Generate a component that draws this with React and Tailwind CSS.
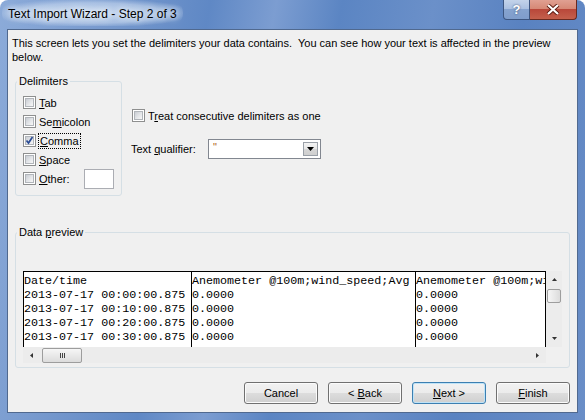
import React from 'react';

const Tri = ({ d, w = 5, h = 3, color = '#333' }) => {
  const horiz = d === 'left' || d === 'right';
  const W = horiz ? h : w;
  const H = horiz ? w : h;
  const pts = {
    up: `${W / 2},0 ${W},${H} 0,${H}`,
    down: `0,0 ${W},0 ${W / 2},${H}`,
    left: `${W},0 ${W},${H} 0,${H / 2}`,
    right: `0,0 0,${H} ${W},${H / 2}`,
  }[d];
  return (
    <svg width={W} height={H} viewBox={`0 0 ${W} ${H}`} className="block">
      <polygon points={pts} fill={color} />
    </svg>
  );
};

const Check = ({ checked }) => (
  <span className="relative block w-[13px] h-[13px] shrink-0 border border-[#8e8f8f] bg-white p-[1px]">
    <span className="block w-full h-full border border-[#b1b5ba] bg-[linear-gradient(135deg,#c9cdd3_0%,#e4e6e9_55%,#f7f7f7_100%)]" />
    {checked && (
      <svg width="11" height="11" viewBox="0 0 11 11" className="absolute left-0 top-0">
        <path d="M2.5 5.5 L4.5 8 L8.5 2" stroke="#2a4b94" strokeWidth="1.7" fill="none" />
      </svg>
    )}
  </span>
);

const Button = ({ children, primary }) => (
  <button
    className={`w-[74px] h-[22px] rounded-[3px] border text-[11px] leading-[18px] text-black bg-[linear-gradient(to_bottom,#f2f2f2_0%,#ebebeb_50%,#dddddd_50%,#cfcfcf_100%)] ${
      primary
        ? 'border-[#3c7fb1] shadow-[inset_0_0_0_1px_#bfe3f7]'
        : 'border-[#707070] shadow-[inset_0_0_0_1px_#fbfbfb]'
    }`}
  >
    {children}
  </button>
);

const Row = ({ children }) => (
  <div className="h-[19px] flex items-center gap-[3px]">{children}</div>
);

const dates = [
  '2013-07-17 00:00:00.875',
  '2013-07-17 00:10:00.875',
  '2013-07-17 00:20:00.875',
  '2013-07-17 00:30:00.875',
];

export default function App() {
  return (
    <div className="w-[585px] h-[420px] overflow-hidden font-['Liberation_Sans',Arial,sans-serif] text-[11px] text-black">
      <div className="w-full h-full rounded-t-[8px] flex flex-col bg-[linear-gradient(100deg,#8cabd9_0%,#7598cd_18%,#5f88c5_32%,#7c9dd1_42%,#5b85c3_52%,#6b90c9_66%,#5982c1_80%,#6a8ec7_100%)]">
        {/* title bar */}
        <div className="h-[29px] shrink-0 flex items-start">
          <div className="ml-[2px] px-[6px] pt-[7px] pb-[4px] text-[12px] leading-[15px] rounded-full bg-[radial-gradient(ellipse_at_center,rgba(214,228,246,0.85)_0%,rgba(214,228,246,0.5)_55%,rgba(214,228,246,0)_80%)] [text-shadow:0_0_6px_#fff,0_0_10px_#e4eefa]">
            Text Import Wizard - Step 2 of 3
          </div>
          <div className="ml-auto mr-[8px] flex h-[20px]">
            <div className="w-[27px] h-full rounded-bl-[4px] border border-t-0 border-[#3d5680] bg-[linear-gradient(to_bottom,#c3d3ea_0%,#a9bfe0_50%,#86a3cf_50%,#7f9dcb_100%)] flex items-center justify-center text-white font-bold text-[13px] leading-none [text-shadow:0_0_2px_#2b3f63]">
              ?
            </div>
            <div className="w-[47px] h-full rounded-br-[4px] border border-t-0 border-l-0 border-[#6a2a20] bg-[linear-gradient(to_bottom,#e0a092_0%,#d58673_50%,#b9483a_50%,#c4604c_100%)] flex items-center justify-center">
              <svg width="14" height="11" viewBox="0 0 14 11">
                <path d="M2 1 L12 10 M12 1 L2 10" stroke="#5a1a10" strokeWidth="4" />
                <path d="M2 1 L12 10 M12 1 L2 10" stroke="#fff" strokeWidth="2.2" />
              </svg>
            </div>
          </div>
        </div>

        {/* client area */}
        <div className="mx-[7px] h-[384px] shrink-0 border border-[#50698f] bg-[#f0f0f0] flex flex-col">
          <p className="pl-[4px] pt-[6px] leading-[14px]">
            This screen lets you set the delimiters your data contains.{'\u00a0'} You can see how your text is
            affected in the preview
            <br />
            below.
          </p>

          <div className="flex items-start mt-[11px]">
            <fieldset className="ml-[7px] w-[107px] border border-[#d5dfe5] rounded-[3px] pb-[7px]">
              <legend className="ml-[1px] px-[2px] leading-[13px]">Delimiters</legend>
              <div className="pl-[7px] pt-[5px]">
                <Row>
                  <Check />
                  <span className="leading-[14px]">
                    <u>T</u>ab
                  </span>
                </Row>
                <Row>
                  <Check />
                  <span className="leading-[14px]">
                    Se<u>m</u>icolon
                  </span>
                </Row>
                <Row>
                  <Check checked />
                  <span className="-ml-[1px] border border-dotted border-black leading-[14px] px-[1px]">
                    <u>C</u>omma
                  </span>
                </Row>
                <Row>
                  <Check />
                  <span className="leading-[14px]">
                    <u>S</u>pace
                  </span>
                </Row>
                <Row>
                  <Check />
                  <span className="w-[45px] leading-[14px]">
                    <u>O</u>ther:
                  </span>
                  <span className="-ml-[3px] block w-[30px] h-[20px] border border-[#abadb3] bg-white" />
                </Row>
              </div>
            </fieldset>

            <div className="ml-[10px] pt-[34px]">
              <div className="h-[13px] flex items-center gap-[3px]">
                <Check />
                <span className="leading-[14px]">
                  T<u>r</u>eat consecutive delimiters as one
                </span>
              </div>
              <div className="mt-[17px] h-[20px] flex items-center -ml-[1px]">
                <span className="w-[77px] leading-[14px]">
                  Text <u>q</u>ualifier:
                </span>
                <div className="w-[113px] h-[20px] border border-[#828790] bg-white flex p-[2px]">
                  <span className="flex-1 pl-[2px] leading-[10px] text-[#b0651e]">"</span>
                  <div className="w-[15px] h-full border border-[#9aa0a8] bg-[linear-gradient(to_bottom,#f3f3f3_0%,#e6e6e6_50%,#d6d6d6_50%,#cfcfcf_100%)] flex items-center justify-center">
                    <Tri d="down" w={7} h={4} color="#000" />
                  </div>
                </div>
              </div>
            </div>
          </div>

          <fieldset className="mt-[30px] ml-[7px] w-[555px] border border-[#d5dfe5] rounded-[3px] pb-[4px]">
            <legend className="ml-[1px] px-[2px] leading-[13px]">
              Data <u>p</u>review
            </legend>
            <div className="pl-[7px] pt-[32px]">
              <div className="w-[539px] h-[92px] flex flex-col">
                <div className="flex h-[76px]">
                  <div className="w-[523px] h-full border-l border-t border-r border-black bg-white flex overflow-hidden font-['Liberation_Mono',monospace] text-[11.7px] leading-[14px] pt-[2px] whitespace-nowrap">
                    <div className="w-[167px] shrink-0">
                      <div>Date/time</div>
                      {dates.map((d) => (
                        <div key={d}>{d}</div>
                      ))}
                    </div>
                    <div className="w-[224px] shrink-0 border-l border-black -mt-[2px] pt-[2px]">
                      <div>Anemometer @100m;wind_speed;Avg</div>
                      {dates.map((d) => (
                        <div key={d}>0.0000</div>
                      ))}
                    </div>
                    <div className="flex-1 min-w-0 overflow-hidden border-l border-black -mt-[2px] pt-[2px]">
                      <div>Anemometer @100m;wi</div>
                      {dates.map((d) => (
                        <div key={d}>0.0000</div>
                      ))}
                    </div>
                  </div>
                  <div className="w-[16px] h-full bg-[#ececec] flex flex-col">
                    <div className="h-[17px] flex items-center justify-center">
                      <Tri d="up" />
                    </div>
                    <div className="mt-[1px] mx-[1px] h-[14px] rounded-[2px] border border-[#9d9d9d] bg-[linear-gradient(to_right,#f6f6f6,#dcdcdc)]" />
                    <div className="flex-1" />
                    <div className="h-[17px] flex items-center justify-center">
                      <Tri d="down" />
                    </div>
                  </div>
                </div>
                <div className="flex h-[16px]">
                  <div className="w-[523px] h-full bg-[#ececec] flex items-center">
                    <div className="w-[17px] h-full flex items-center justify-center">
                      <Tri d="left" />
                    </div>
                    <div className="ml-[2px] w-[40px] h-[15px] rounded-[2px] border border-[#9d9d9d] bg-[linear-gradient(to_bottom,#f6f6f6,#dcdcdc)] flex items-center justify-center gap-[1px]">
                      <span className="block w-[1px] h-[5px] bg-[#444]" />
                      <span className="block w-[1px] h-[5px] bg-[#444]" />
                      <span className="block w-[1px] h-[5px] bg-[#444]" />
                    </div>
                    <div className="flex-1" />
                    <div className="w-[17px] h-full flex items-center justify-center">
                      <Tri d="right" />
                    </div>
                  </div>
                  <div className="w-[16px] h-full bg-[#f0f0f0]" />
                </div>
              </div>
            </div>
          </fieldset>

          <div className="mt-[14px] flex justify-end gap-[10px] pr-[7px]">
            <Button>Cancel</Button>
            <Button>
              &lt; <u>B</u>ack
            </Button>
            <Button primary>
              <u>N</u>ext &gt;
            </Button>
            <Button>
              <u>F</u>inish
            </Button>
          </div>
        </div>
      </div>
    </div>
  );
}
